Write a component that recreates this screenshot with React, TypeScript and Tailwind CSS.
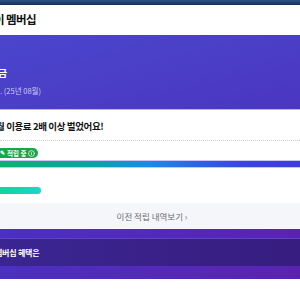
import { Info } from "lucide-react";

const App = () => {
    return (
        <div className="w-[300px] h-[300px] overflow-hidden bg-white font-['Noto_Sans_CJK_KR','Noto_Sans',sans-serif]">
            <div className="h-[5px] bg-gradient-to-b from-[#2d5283] to-[#143258]"></div>
            <div className="h-[30px] flex items-center">
                <h1 className="ml-[-6px] text-[11.5px] font-bold text-[#111] tracking-[-0.05em]">
                    이 멤버십
                </h1>
            </div>
            <section className="h-[74px] bg-gradient-to-br from-[#4a46cd] to-[#4b36c0] pt-[31px] text-white">
                <p className="ml-[-2px] text-[10px] leading-[14px] font-bold">금</p>
                <p className="mt-[6px] text-[7.5px] leading-[10px] text-[#cfcaf3]">
                    <span className="text-[#f0a0c8]">.</span> (25년 08월)
                </p>
            </section>
            <section className="h-[94px] bg-white border-t border-[#b9b3ee]">
                <h3 className="mt-[9px] ml-[-4px] text-[9.5px] leading-[14px] font-bold text-[#111] tracking-[-0.04em]">
                    월 이용료 2배 이상 벌었어요!
                </h3>
                <div className="mt-[7px] border-t border-dotted border-[#cfcfd4]"></div>
                <div className="mt-[7px] flex">
                    <span className="ml-[-6px] h-[10px] pl-[6px] pr-[3px] rounded-full bg-[#1aa54b] flex items-center gap-[2px] text-white text-[6.5px] font-bold leading-none">
                        <span className="text-[6px]">✎</span>
                        적립 중
                        <Info className="w-[7px] h-[7px]" strokeWidth={2.5} />
                    </span>
                </div>
                <div className="mt-[2px] h-[8px] py-[1px] bg-[#c9c5f4]">
                    <div className="h-full bg-[linear-gradient(90deg,#0fb072_0%,#08a6a0_30%,#1a8ae8_50%,#3a45e0_80%,#3f3cdb_100%)]"></div>
                </div>
                <div className="mt-[19px] h-[7px] w-[41px] rounded-r-full bg-gradient-to-r from-[#12d49c] to-[#1bd6c6]"></div>
            </section>
            <div className="h-[26px] bg-[#f5f6f9] flex items-center justify-center">
                <span className="ml-[4px] text-[8.5px] text-[#6b6b72]">이전 적립 내역보기 ›</span>
            </div>
            <section className="h-[50px] bg-gradient-to-r from-[#4b30c1] to-[#5a22b3] pt-[9px]">
                <div className="h-[28px] bg-gradient-to-r from-[#3a2592] to-[#371d7f] border-t border-[#5a46c4] flex items-center">
                    <span className="ml-[-5px] text-[8px] font-bold text-white tracking-[-0.03em]">
                        멤버십 혜택은
                    </span>
                </div>
            </section>
        </div>
    );
};

export default App;
